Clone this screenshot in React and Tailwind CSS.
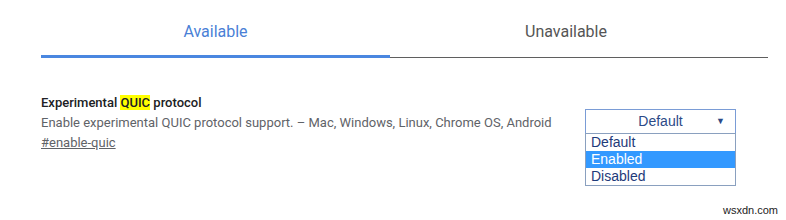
export default function App() {
  return (
    <div className="w-[786px] h-[220px] bg-white relative font-['Roboto',sans-serif]">
      <div className="pt-[20px] ml-[41px] w-[727px]">
        <div className="flex">
          <div className="w-[349px] h-[38px] flex items-start justify-center border-b-[3px] border-[#4a87e0]">
            <span className="text-[16px] text-[#4a7fd6] leading-[24px]">Available</span>
          </div>
          <div className="flex-1 h-[38px] flex items-start justify-center pr-[26px] border-b-[1.5px] border-[#5f5f5f]">
            <span className="text-[16px] text-[#555555] leading-[24px]">Unavailable</span>
          </div>
        </div>
      </div>

      <div className="ml-[41px] mt-[35px] w-[695px] flex justify-between">
        <div className="text-[13px] leading-[20px]">
          <div className="font-medium text-[#202124]">
            Experimental <span className="bg-[#ffff00]">QUIC</span> protocol
          </div>
          <div className="text-[#5f6368]">
            Enable experimental QUIC protocol support. – Mac, Windows, Linux, Chrome OS, Android
          </div>
          <div className="text-[#5f6368] underline">#enable-quic</div>
        </div>

        <div className="relative w-[151px] mt-[16px]">
          <div className="h-[25px] border border-[#7a9cd6] flex items-center justify-center relative font-['Liberation_Sans',Arial,sans-serif] text-[14px] text-[#2c4a87]">
            Default
            <span className="absolute right-[10px] top-[5px] text-[9px] text-[#2c4a87]">▼</span>
          </div>
          <div className="absolute left-0 top-[24px] w-[151px] border border-[#8aa0bf] bg-white font-['Liberation_Sans',Arial,sans-serif] text-[14px] leading-[17px]">
            <div className="px-[5px] text-[#1e3a7a]">Default</div>
            <div className="px-[5px] bg-[#3399ff] text-white">Enabled</div>
            <div className="px-[5px] text-[#1e3a7a]">Disabled</div>
          </div>
        </div>
      </div>

      <div className="absolute right-[8px] bottom-[2px] text-[11px] text-[#222] font-['Liberation_Sans',Arial,sans-serif]">wsxdn.com</div>
    </div>
  )
}
